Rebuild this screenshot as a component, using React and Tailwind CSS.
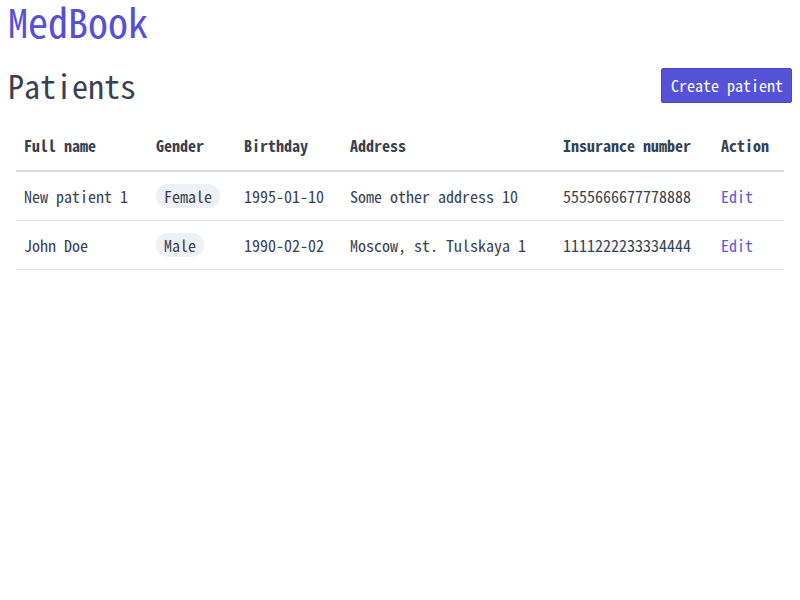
import React from "react";

const rows = [
  { name: "New patient 1", gender: "Female", birthday: "1995-01-10", address: "Some other address 10", ins: "5555666677778888" },
  { name: "John Doe", gender: "Male", birthday: "1990-02-02", address: "Moscow, st. Tulskaya 1", ins: "1111222233334444" },
];

export default function App() {
  return (
    <div className="px-2 text-[#374151]" style={{ fontFamily: '"Noto Sans Mono CJK SC", "Noto Sans CJK SC", monospace' }}>
      <h1 className="text-[40px] leading-[42px] text-[#5650d8]">MedBook</h1>
      <div className="flex items-start justify-between mt-[24px]">
        <h2 className="text-[32px] leading-[38px]">Patients</h2>
        <button className="mt-[2px] bg-[#5652d8] border border-[#4b46c9] rounded-[2px] text-white text-[16px] leading-[19px] pl-[9px] pr-[8px] py-[7px]">Create patient</button>
      </div>
      <div className="px-2 mt-[18px]">
        <table className="w-full text-[16px] border-collapse">
          <thead>
            <tr className="border-b-2 border-[#d9dbe0]">
              <th className="text-left font-bold px-2 pb-[2px] h-[49px] w-[132px]">Full name</th>
              <th className="text-left font-bold px-2 pb-[2px] w-[88px]">Gender</th>
              <th className="text-left font-bold px-2 pb-[2px] w-[106px]">Birthday</th>
              <th className="text-left font-bold px-2 pb-[2px] w-[213px]">Address</th>
              <th className="text-left font-bold px-2 pb-[2px] w-[158px]">Insurance number</th>
              <th className="text-left font-bold px-2 pb-[2px]">Action</th>
            </tr>
          </thead>
          <tbody>
            {rows.map((r) => (
              <tr key={r.name} className="border-b border-[#dfe1e6]">
                <td className="px-2 h-[49px]">{r.name}</td>
                <td className="px-2">
                  <span className="inline-block bg-[#eff0f3] rounded-full px-2 leading-[24px]">{r.gender}</span>
                </td>
                <td className="px-2">{r.birthday}</td>
                <td className="px-2">{r.address}</td>
                <td className="px-2">{r.ins}</td>
                <td className="px-2"><a className="text-[#5b5bdf] cursor-pointer">Edit</a></td>
              </tr>
            ))}
          </tbody>
        </table>
      </div>
    </div>
  );
}
